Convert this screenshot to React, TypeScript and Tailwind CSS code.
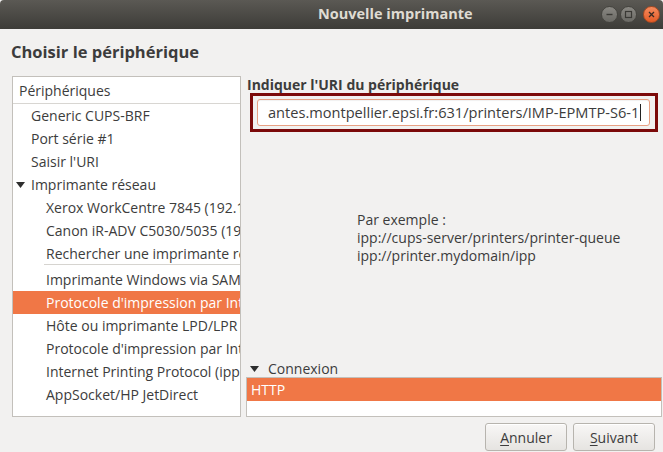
import React from 'react'

type Row = { label: string; depth: 0 | 1; expander?: boolean; selected?: boolean; sepAfter?: boolean }

const rows: Row[] = [
  { label: 'Generic CUPS-BRF', depth: 0 },
  { label: 'Port série #1', depth: 0 },
  { label: "Saisir l'URI", depth: 0 },
  { label: 'Imprimante réseau', depth: 0, expander: true },
  { label: 'Xerox WorkCentre 7845 (192.168.10.21)', depth: 1 },
  { label: 'Canon iR-ADV C5030/5035 (192.168.10.22)', depth: 1 },
  { label: 'Rechercher une imprimante réseau', depth: 1, sepAfter: true },
  { label: 'Imprimante Windows via SAMBA', depth: 1 },
  { label: "Protocole d'impression par Internet (https)", depth: 1, selected: true },
  { label: 'Hôte ou imprimante LPD/LPR', depth: 1 },
  { label: "Protocole d'impression par Internet (ipp)", depth: 1 },
  { label: 'Internet Printing Protocol (ipps)', depth: 1 },
  { label: 'AppSocket/HP JetDirect', depth: 1 },
]

function Triangle() {
  return (
    <svg width="9" height="6" viewBox="0 0 9 6" className="shrink-0">
      <polygon points="0,0 9,0 4.5,6" fill="#2e2e2e" />
    </svg>
  )
}

function WinButton({ kind }: { kind: 'min' | 'max' | 'close' }) {
  const close = kind === 'close'
  return (
    <span
      className={
        close
          ? 'w-[17px] h-[17px] rounded-full grid place-items-center border border-[#a94a22] bg-gradient-to-b from-[#f58a5c] to-[#e45a24]'
          : 'w-[17px] h-[17px] rounded-full grid place-items-center border border-[#45443f] bg-gradient-to-b from-[#8a8883] to-[#6a6964]'
      }
    >
      <svg width="9" height="9" viewBox="0 0 9 9">
        {kind === 'min' && <line x1="1.5" y1="4.5" x2="7.5" y2="4.5" stroke="#3a3935" strokeWidth="1.4" />}
        {kind === 'max' && <rect x="1.5" y="1.5" width="6" height="6" fill="none" stroke="#3a3935" strokeWidth="1.2" />}
        {kind === 'close' && (
          <path d="M2 2 L7 7 M7 2 L2 7" stroke="#3b2a22" strokeWidth="1.3" fill="none" />
        )}
      </svg>
    </span>
  )
}

function Button({ mnemonic, rest }: { mnemonic: string; rest: string }) {
  return (
    <button
      type="button"
      className="w-[82px] h-[28px] rounded-[3px] border border-[#b7b4ae] bg-gradient-to-b from-[#f8f7f6] to-[#e6e4e1] text-[14px] text-[#3c3c3c] shadow-[inset_0_1px_0_#ffffff]"
    >
      <span className="underline underline-offset-2">{mnemonic}</span>
      {rest}
    </button>
  )
}

export default function App() {
  return (
    <div className="w-[663px] h-[452px] flex flex-col bg-[#f2f1f0] overflow-hidden font-['Open_Sans',sans-serif] text-[#3c3c3c]">
      <div className="h-[29px] shrink-0 flex items-center bg-gradient-to-b from-[#5b5954] to-[#3d3c38] rounded-t-[4px]">
        <div className="flex-1 pl-[318px] text-[14.5px] font-bold text-[#dfdbd2] leading-none">Nouvelle imprimante</div>
        <div className="flex items-center gap-[2px] pr-[3px]">
          <WinButton kind="min" />
          <WinButton kind="max" />
          <span className="w-[2px]" />
          <WinButton kind="close" />
        </div>
      </div>

      <div className="h-[47px] shrink-0 pl-[11px] pt-[11px] text-[16.5px] font-bold leading-[24px] text-[#3c3c3c]">
        Choisir le périphérique
      </div>

      <div className="h-[341px] shrink-0 flex pl-[12px] pr-[1px]">
        <div className="w-[229px] shrink-0 bg-white border border-[#c3c0bb] overflow-hidden text-[14px]">
          <div className="h-[27px] flex items-center pl-[6px] border-b border-[#d8d6d2]">Périphériques</div>
          {rows.map((r) => (
            <div key={r.label}>
              <div
                className={
                  (r.selected ? 'bg-[#f07746] text-white ' : '') +
                  (r.sepAfter ? 'h-[22px] ' : 'h-[23px] ') +
                  'flex items-center whitespace-nowrap'
                }
              >
                {r.depth === 0 ? (
                  <span className="w-[18px] pl-[3px] flex items-center shrink-0">{r.expander && <Triangle />}</span>
                ) : (
                  <span className="w-[33px] shrink-0" />
                )}
                <span>{r.label}</span>
              </div>
              {r.sepAfter && (
                <div className="h-[4px] pl-[31px] pb-[3px]">
                  <div className="h-px bg-[#d6d4d0]" />
                </div>
              )}
            </div>
          ))}
        </div>

        <div className="flex-1 ml-[5px] flex flex-col">
          <div className="h-[17px] pl-[1px] text-[14px] font-bold leading-[17px]">Indiquer l'URI du périphérique</div>
          <div className="ml-[4px] mr-[4px] mt-[0px] h-[39px] border-[3px] border-[#7c0a0a] pl-[4px] pr-[5px] py-[3px]">
            <div className="h-full rounded-[3px] border border-[#e8a184] bg-white flex items-center pl-[10px] overflow-hidden shadow-[inset_0_1px_1px_rgba(0,0,0,0.06)]">
              <span className="text-[14.6px] whitespace-nowrap">antes.montpellier.epsi.fr:631/printers/IMP-EPMTP-S6-1</span>
              <span className="w-px h-[17px] bg-[#222] ml-[1px]" />
            </div>
          </div>

          <div className="mt-[79px] pl-[111px] text-[14px] leading-[18px]">
            <div>Par exemple :</div>
            <div>ipp://cups-server/printers/printer-queue</div>
            <div>ipp://printer.mydomain/ipp</div>
          </div>

          <div className="flex-1" />
          <div className="h-[17px] flex items-center gap-[9px] pl-[4px] text-[14px]">
            <Triangle />
            <span>Connexion</span>
          </div>
          <div className="h-[40px] bg-white border border-[#c3c0bb] text-[14px]">
            <div className="h-[23px] bg-[#f07746] text-white flex items-center pl-[4px]">HTTP</div>
          </div>
        </div>
      </div>

      <div className="flex justify-end gap-[6px] pr-[8px] pt-[6px]">
        <Button mnemonic="A" rest="nnuler" />
        <Button mnemonic="S" rest="uivant" />
      </div>
    </div>
  )
}
